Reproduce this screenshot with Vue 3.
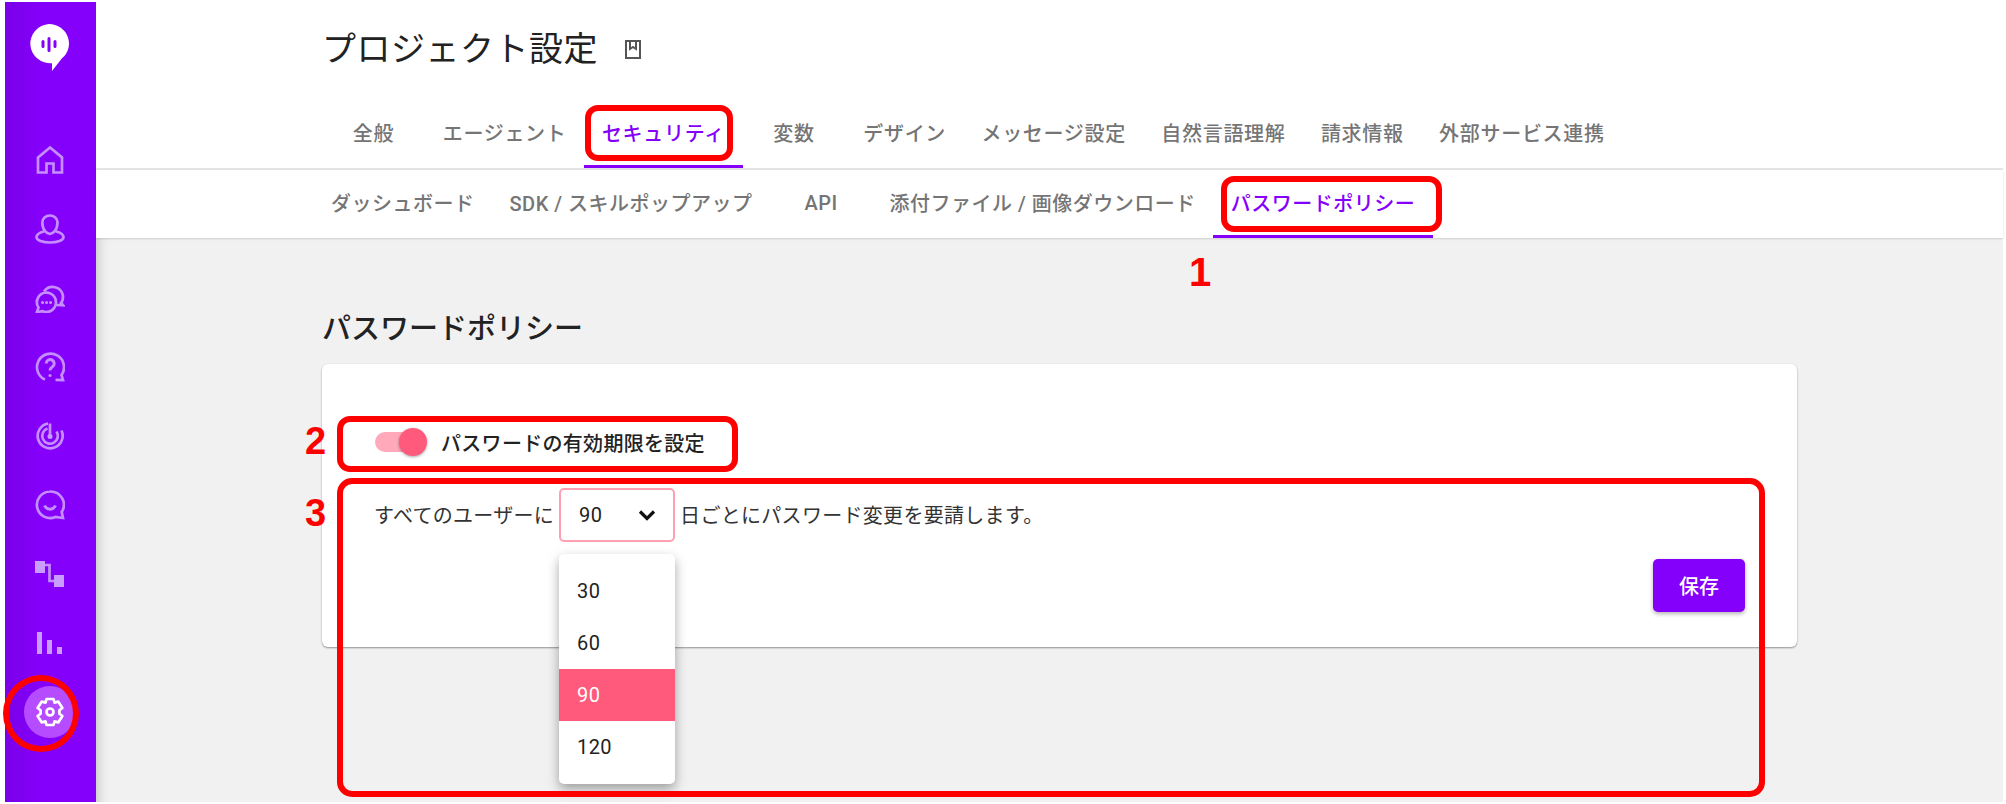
<script setup>
const tabs = ['全般', 'エージェント', 'セキュリティ', '変数', 'デザイン', 'メッセージ設定', '自然言語理解', '請求情報', '外部サービス連携']
const subtabs = ['ダッシュボード', 'SDK / スキルポップアップ', 'API', '添付ファイル / 画像ダウンロード', 'パスワードポリシー']
const options = ['30', '60', '90', '120']
</script>

<template>
  <div class="page">
    <aside class="sidebar">
      <svg class="logo" width="40" height="48" viewBox="0 0 40 48">
        <path d="M20 0a20 19.5 0 0 1 13 34.300L23 47v-7.800A20 19.500 0 1 1 20 0z" fill="#fff" />
        <path d="M14 17.500v5M20 14.500v12M26 17.500v5" stroke="#8500f8" stroke-width="3" stroke-linecap="round" fill="none" />
      </svg>
      <nav class="icons">
        <a class="icon"><svg width="30" height="30" viewBox="0 0 30 30"><path d="M3 12.500 15 2.500l12 10v15h-8.500v-9h-7v9H3z" /></svg></a>
        <a class="icon"><svg width="30" height="30" viewBox="0 0 30 30"><path d="M10 17c-1.800-2.300-2.700-5.500-2.700-8.500a7.600 7 0 0 1 15.200 0c0 3-.9 6.200-2.700 8.500-1 1.400-2.500 2.500-4.900 3-2.400-.5-3.900-1.600-4.900-3z" /><path d="M9.500 17.300C4.500 18.500 1.500 20.800 1.500 23.300c0 3 6 5.200 13.500 5.200s13.500-2.200 13.500-5.200c0-2.500-3-4.800-8-6" /></svg></a>
        <a class="icon"><svg width="30" height="30" viewBox="0 0 30 30"><path d="M9 8.500A10.500 10.500 0 0 1 28 13c0 3-.6 5.500-2 7l2 2.300-6.500-.3" /><path d="M11.500 9.500a9.700 9.700 0 0 1 9.500 9.700 9.700 9.700 0 0 1-13.500 9L2 29l1.500-4.500A9.700 9.700 0 0 1 11.500 9.500z" /><path class="dots" d="M7.500 19.500h.1M11.500 19.500h.1M15.500 19.500h.1" /></svg></a>
        <a class="icon"><svg width="30" height="30" viewBox="0 0 30 30"><path d="M10 27.500A13.500 13.500 0 1 1 26.500 23l1.500 5-7.500-.2" /><path class="q" d="M11.200 11.500a4 4 0 1 1 6 3.500c-1.400.9-2.200 1.600-2.200 3.500" /><path class="dots" d="M15 23.500h.1" /></svg></a>
        <a class="icon"><svg width="30" height="30" viewBox="0 0 30 30"><path d="M13 2.500A12.500 12.500 0 1 0 26.500 9.500" /><path d="M12.500 7.500A7.800 7.800 0 1 0 21.500 10.500" /><path d="M15 2.500V15" /><circle class="solid" cx="15" cy="15.500" r="2.500" /></svg></a>
        <a class="icon"><svg width="30" height="30" viewBox="0 0 30 30"><path d="M15 1.500A13.300 13.300 0 1 0 20.500 27l7.500 1-1.300-6A13.300 13.300 0 0 0 15 1.500z" /><path class="q" d="M9.500 15.500c1.200 2.700 3.200 3.700 5.500 3.700s4.300-1 5.500-3.700" /></svg></a>
        <a class="icon"><svg width="30" height="30" viewBox="0 0 30 30"><rect class="solid" x="0" y="2" width="10" height="12" /><rect class="solid" x="19" y="16" width="10" height="12" /><path d="M10 6h4.500v16H19" /></svg></a>
        <a class="icon"><svg width="30" height="30" viewBox="0 0 30 30"><rect class="solid" x="2" y="4" width="5" height="22" /><rect class="solid" x="12" y="12" width="5" height="14" /><rect class="solid" x="22" y="19" width="5" height="7" /></svg></a>
        <a class="icon active"><svg width="30" height="30" viewBox="0 0 30 30"><path d="M11.500 2h7l1 3.600 3.700-1 4.200 6.400-3 2.300v3.400l3 2.300-4.200 6.400-3.700-1-1 3.600h-7l-1-3.600-3.700 1-4.200-6.400 3-2.300v-3.400l-3-2.300 4.200-6.400 3.700 1z" stroke-linejoin="round" /><circle cx="15" cy="15" r="3.500" /></svg></a>
      </nav>
    </aside>

    <main class="main">
      <header class="head">
        <div class="title-row">
          <h1>プロジェクト設定</h1>
          <svg class="book" width="16" height="19" viewBox="0 0 16 19"><path d="M1 1h14v17H1zM5 1v8l3-2 3 2V1" /></svg>
        </div>
        <div class="tabs">
          <div v-for="t in tabs" :key="t" class="tab" :class="{ on: t === 'セキュリティ' }">{{ t }}</div>
        </div>
      </header>
      <div class="subtabs">
        <div v-for="t in subtabs" :key="t" class="tab" :class="{ on: t === 'パスワードポリシー' }">{{ t }}</div>
      </div>

      <section class="content">
        <h2>パスワードポリシー</h2>
        <div class="card">
          <div class="toggle-row">
            <span class="switch"><i class="knob"></i></span>
            <span class="toggle-label">パスワードの有効期限を設定</span>
          </div>
          <div class="sentence">
            <span>すべてのユーザーに</span>
            <div class="select">
              <span>90</span>
              <svg width="18" height="12" viewBox="0 0 18 12"><path d="M2 2.500l7 7 7-7" /></svg>
              <ul class="menu">
                <li v-for="o in options" :key="o" :class="{ sel: o === '90' }">{{ o }}</li>
              </ul>
            </div>
            <span>日ごとにパスワード変更を要請します。</span>
          </div>
          <div class="actions"><button class="save">保存</button></div>
        </div>
      </section>
    </main>

    <div class="mark box-gear"></div>
    <div class="mark box-tab"></div>
    <div class="mark box-sub"></div>
    <div class="mark box-toggle"></div>
    <div class="mark box-area"></div>
    <b class="num num1">1</b>
    <b class="num num2">2</b>
    <b class="num num3">3</b>
  </div>
</template>

<style>
html, body { margin: 0; background: #fff; }
</style>

<style scoped>
.page {
  position: relative;
  display: flex;
  box-sizing: border-box;
  width: 2006px;
  height: 804px;
  padding: 2px 3px 2px 5px;
  overflow: hidden;
  font-family: Roboto, "Noto Sans CJK JP", sans-serif;
  background: #fff;
}
.sidebar {
  flex: 0 0 91px;
  display: flex;
  flex-direction: column;
  align-items: center;
  background: linear-gradient(90deg, #7a00e8, #8500fb 40%);
}
.logo { margin-top: 22px; margin-right: 3px; }
.icons { display: flex; flex-direction: column; align-items: center; margin-top: 62px; margin-right: 2px; }
.icon {
  width: 52px;
  height: 52px;
  margin-bottom: 17px;
  display: flex;
  align-items: center;
  justify-content: center;
  border-radius: 50%;
}
.icon svg { fill: none; stroke: #c58eff; stroke-width: 2.700; }
.icon .solid { fill: #c99cff; stroke: none; }
.icon .dots { stroke-width: 3; stroke-linecap: round; }
.icon .q { stroke-width: 3; }
.icon.active { background: #b54cff; }
.icon.active svg { stroke: #fff; }

.main { flex: 1; min-width: 0; display: flex; flex-direction: column; background: #f1f1f1; }
.head { background: #fff; border-bottom: 2px solid #e4e4e4; padding-left: 226px; }
.title-row { display: flex; align-items: center; height: 94px; }
h1 { margin: 0; font-size: 34px; line-height: 92px; font-weight: 400; color: #222; letter-spacing: 0.5px; }
.book { margin-left: 27px; fill: none; stroke: #555; stroke-width: 2; }
.tabs { display: flex; height: 72px; }
.tab {
  box-sizing: border-box;
  min-width: 102px;
  padding: 0 17.500px;
  display: flex;
  align-items: center;
  justify-content: center;
  font-size: 20px;
  font-weight: 500;
  letter-spacing: 0.5px;
  color: #757575;
  border-bottom: 3px solid transparent;
  white-space: nowrap;
}
.tabs .tab { padding: 3px 17.700px 0; letter-spacing: 0.7px; min-width: 103px; }
.tab.on { color: #8500fb; border-bottom-color: #8500fb; }
.subtabs {
  display: flex;
  height: 68px;
  box-sizing: border-box;
  padding-left: 217.500px;
  background: #fff;
  box-shadow: 0 1px 2px rgba(0, 0, 0, 0.15);
}
.content {
  flex: 1;
  padding: 0 206px 0 226px;
  box-shadow: inset 14px 0 14px -14px rgba(0, 0, 0, 0.25);
}
h2 { margin: 0; padding-top: 72px; height: 54px; font-size: 29px; line-height: 38px; font-weight: 500; color: #222; }
.card {
  height: 283px;
  box-sizing: border-box;
  padding: 63px 52px 0 52px;
  background: #fff;
  border-radius: 6px;
  box-shadow: 0 1px 2px rgba(0, 0, 0, 0.4);
}
.toggle-row { display: flex; align-items: center; height: 30px; padding-left: 1px; }
.switch { position: relative; width: 45px; height: 20px; border-radius: 10px; background: #ffa9bb; }
.knob {
  position: absolute;
  left: 24px;
  top: -4px;
  width: 28px;
  height: 28px;
  border-radius: 50%;
  background: #ff5a7b;
  box-shadow: 0 1px 3px rgba(0, 0, 0, 0.35);
}
.toggle-label { margin-left: 21px; font-size: 20px; font-weight: 500; color: #222; letter-spacing: 0.3px; }
.sentence {
  display: flex;
  align-items: center;
  gap: 5px;
  margin-top: 31px;
  font-size: 20px;
  color: #333;
  letter-spacing: 0.3px;
}
.sentence > span { padding-bottom: 2px; }
.select {
  position: relative;
  box-sizing: border-box;
  width: 116px;
  height: 54px;
  display: flex;
  align-items: center;
  justify-content: space-between;
  padding: 0 17px 0 18px;
  border: 2px solid #ff9fb4;
  border-radius: 5px;
  color: #222;
}
.select svg { fill: none; stroke: #111; stroke-width: 3.200; }
.menu {
  position: absolute;
  left: -2px;
  top: 64px;
  width: 116px;
  margin: 0;
  padding: 11px 0;
  list-style: none;
  background: #fff;
  border-radius: 5px;
  box-shadow: 0 5px 12px rgba(0, 0, 0, 0.35);
  z-index: 2;
}
.menu li { height: 52px; line-height: 53px; padding-left: 18px; color: #222; }
.menu li.sel { background: #ff5a7b; color: #fff; }
.actions { display: flex; justify-content: flex-end; margin-top: 17px; }
.save {
  width: 92px;
  height: 53px;
  border: 0;
  border-radius: 5px;
  background: #8500fb;
  color: #fff;
  font: 500 20px Roboto, "Noto Sans CJK JP", sans-serif;
  box-shadow: 0 2px 4px rgba(0, 0, 0, 0.3);
}

.mark { position: absolute; box-sizing: border-box; border: 6px solid #ff0000; border-radius: 13px; z-index: 5; }
.box-gear { left: 3px; top: 675px; width: 76px; height: 77px; border-radius: 50%; }
.box-tab { left: 585px; top: 105px; width: 148px; height: 56px; }
.box-sub { left: 1221px; top: 176px; width: 221px; height: 56px; }
.box-toggle { left: 337px; top: 416px; width: 401px; height: 56px; }
.box-area { left: 337px; top: 478px; width: 1428px; height: 319px; border-radius: 15px; }
.num { position: absolute; color: #ff0000; font-family: "Liberation Sans", sans-serif; font-weight: 700; line-height: 1; z-index: 5; }
.num1 { left: 1189px; top: 252px; font-size: 40px; }
.num2 { left: 305px; top: 422px; font-size: 38px; }
.num3 { left: 305px; top: 494px; font-size: 38px; }
</style>
